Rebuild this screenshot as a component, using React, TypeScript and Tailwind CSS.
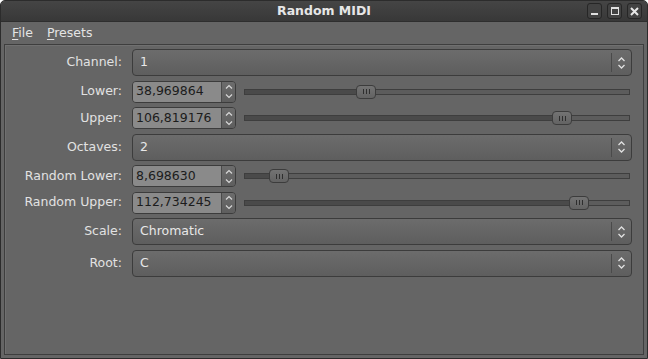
import React from 'react';

const MAX = 127;

const Chevrons = ({ className = '' }: { className?: string }) => (
  <svg width="9" height="14" viewBox="0 0 9 14" className={className} fill="none" stroke="currentColor" strokeWidth="1.3">
    <path d="M1.5 5 L4.5 2 L7.5 5" />
    <path d="M1.5 9 L4.5 12 L7.5 9" />
  </svg>
);

const Combo = ({ value }: { value: string }) => (
  <div className="flex h-[27px] flex-1 items-center rounded-[4px] border border-[#3c3c3c] bg-gradient-to-b from-[#6c6c6c] to-[#5e5e5e] text-[#e8e8e8]">
    <span className="flex-1 pl-[7px]">{value}</span>
    <div className="h-[19px] w-px bg-[#4a4a4a]" />
    <div className="flex w-[19px] justify-center text-[#e0e0e0]">
      <Chevrons />
    </div>
  </div>
);

const Spin = ({ value }: { value: number }) => (
  <div className="flex h-[22px] w-[104px] shrink-0 overflow-hidden rounded-[4px] border border-[#3c3c3c]">
    <div className="flex flex-1 items-center bg-[#8a8a8a] pl-[3px] text-[#1c1c1c]">
      {value.toFixed(6).replace('.', ',')}
    </div>
    <div className="flex w-[14px] flex-col border-l border-[#4a4a4a] bg-gradient-to-b from-[#6c6c6c] to-[#5e5e5e] text-[#d8d8d8]">
      <div className="flex flex-1 items-center justify-center">
        <svg width="8" height="5" viewBox="0 0 8 5" fill="none" stroke="currentColor" strokeWidth="1.2"><path d="M1 4.5 L4 1.5 L7 4.5" /></svg>
      </div>
      <div className="flex flex-1 items-center justify-center">
        <svg width="8" height="5" viewBox="0 0 8 5" fill="none" stroke="currentColor" strokeWidth="1.2"><path d="M1 0.5 L4 3.5 L7 0.5" /></svg>
      </div>
    </div>
  </div>
);

const Slider = ({ value }: { value: number }) => {
  const left = Math.round((value / MAX) * 366);
  return (
    <div className="relative ml-[8px] mr-[2px] h-[14px] flex-1">
      <div className="absolute left-0 right-0 top-[4px] h-[6px] border border-[#3e3e3e] bg-[#5c5c5c]" />
      <div className="absolute left-0 top-[4px] h-[6px] border border-[#3e3e3e] bg-[#4a4a4a]" style={{ width: left + 10 }} />
      <div
        className="absolute top-0 flex h-[14px] w-[20px] items-center justify-center gap-[2px] rounded-[4px] border border-[#3c3c3c] bg-gradient-to-b from-[#737373] to-[#636363]"
        style={{ left }}
      >
        <div className="h-[5px] w-px bg-[#2e2e2e]" />
        <div className="h-[5px] w-px bg-[#2e2e2e]" />
        <div className="h-[5px] w-px bg-[#2e2e2e]" />
      </div>
    </div>
  );
};

const Row = ({ label, children, h }: { label: string; children: React.ReactNode; h: string }) => (
  <div className={`flex items-center ${h}`}>
    <div className="w-[122px] shrink-0 pr-[10px] text-right text-[#e2e2e2]">{label}</div>
    <div className="flex flex-1 items-center">{children}</div>
  </div>
);

export default function App() {
  return (
    <div
      className="flex h-[359px] w-[648px] flex-col overflow-hidden rounded-t-[5px] border border-[#2c2c2c] bg-[#656565] text-[12.5px]"
      style={{ fontFamily: '"DejaVu Sans", "Liberation Sans", sans-serif' }}
    >
      {/* Title bar */}
      <div className="relative flex h-[21px] shrink-0 items-center justify-center border-b border-[#2e2e2e] bg-gradient-to-b from-[#454545] to-[#383838]">
        <span className="font-semibold text-[#e6e6e6]">Random MIDI</span>
        <div className="absolute right-[5px] top-[2px] flex gap-[5px]">
          {['min', 'max', 'close'].map((k) => (
            <div key={k} className="flex h-[16px] w-[15px] items-center justify-center rounded-[3px] border border-[#262626] bg-[#424242]">
              {k === 'min' && <div className="mt-[6px] h-[2px] w-[7px] bg-[#e0e0e0]" />}
              {k === 'max' && <div className="h-[8px] w-[8px] border-[1.5px] border-t-[2px] border-[#e0e0e0]" />}
              {k === 'close' && (
                <svg width="9" height="9" viewBox="0 0 9 9" stroke="#e6e6e6" strokeWidth="2"><path d="M1 1 L8 8 M8 1 L1 8" /></svg>
              )}
            </div>
          ))}
        </div>
      </div>

      {/* Menu bar */}
      <div className="flex h-[22px] shrink-0 items-center gap-[14px] px-[11px] pt-[1px] text-[#e4e4e4]">
        <span><span className="underline underline-offset-2">F</span>ile</span>
        <span><span className="underline underline-offset-2">P</span>resets</span>
      </div>

      {/* Content frame */}
      <div className="mx-[3px] mb-[3px] flex flex-1 flex-col gap-[4.5px] border border-[#3e3e3e] pl-[5px] pr-[11px] pt-[4px] shadow-[inset_1px_1px_0_#707070]">
        <Row label="Channel:" h="h-[27px]"><Combo value="1" /></Row>
        <Row label="Lower:" h="h-[22px]"><Spin value={38.969864} /><Slider value={38.969864} /></Row>
        <Row label="Upper:" h="h-[22px]"><Spin value={106.819176} /><Slider value={106.819176} /></Row>
        <Row label="Octaves:" h="h-[27px]"><Combo value="2" /></Row>
        <Row label="Random Lower:" h="h-[22px]"><Spin value={8.69863} /><Slider value={8.69863} /></Row>
        <Row label="Random Upper:" h="h-[22px]"><Spin value={112.734245} /><Slider value={112.734245} /></Row>
        <Row label="Scale:" h="h-[27px]"><Combo value="Chromatic" /></Row>
        <Row label="Root:" h="h-[27px]"><Combo value="C" /></Row>
      </div>
    </div>
  );
}
